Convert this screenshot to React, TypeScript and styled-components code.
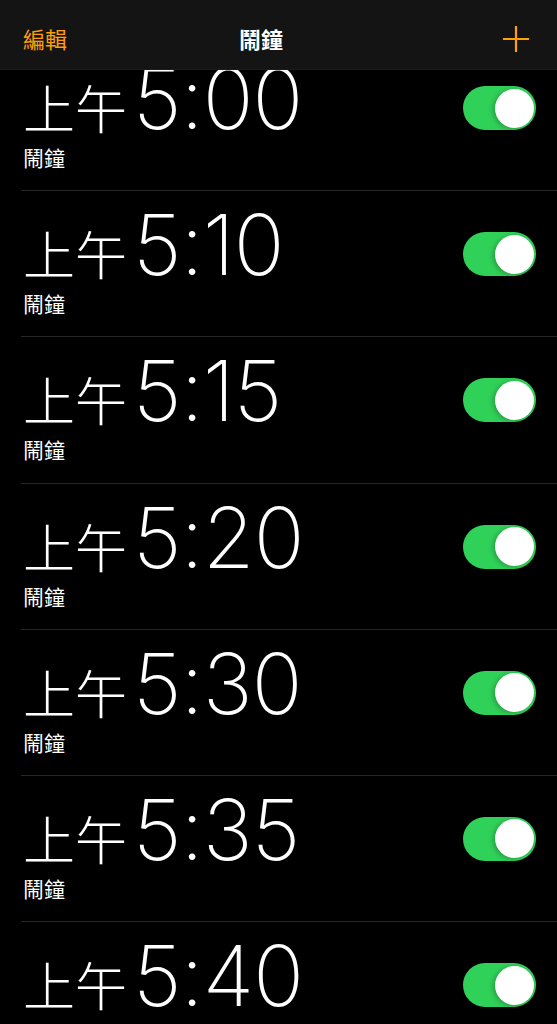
import { createGlobalStyle, styled } from "styled-components"

interface Alarm {
    id: number
    time: string
    on: boolean
}

const alarms: Alarm[] = [
    { id: 1, time: "5:00", on: true },
    { id: 2, time: "5:10", on: true },
    { id: 3, time: "5:15", on: true },
    { id: 4, time: "5:20", on: true },
    { id: 5, time: "5:30", on: true },
    { id: 6, time: "5:35", on: true },
    { id: 7, time: "5:40", on: true },
]

const GlobalStyle = createGlobalStyle`
    html, body {
        margin: 0;
        padding: 0;
        background: #000000;
        overflow: hidden;
    }
    body {
        font-family: "Noto Sans CJK TC", "Noto Sans", sans-serif;
        color: #ffffff;
    }
`

const Screen = styled.div`
    position: relative;
    width: 557px;
    height: 1024px;
    overflow: hidden;
    background: #000000;
`

// header floats over the list, like a translucent iOS nav bar
const NavBar = styled.header`
    position: absolute;
    top: 0;
    left: 0;
    right: 0;
    z-index: 2;
    height: 70px;
    box-sizing: border-box;
    padding: 0 28px 0 23px;
    display: grid;
    grid-template-columns: 216px auto 1fr;
    align-items: center;
    background: #141414;
    border-bottom: 1px solid #1c1c1c;
`

const NavButton = styled.button`
    justify-self: start;
    padding: 0;
    border: none;
    background: none;
    color: #ff9f0a;
    font-family: "Noto Sans CJK TC", sans-serif;
    font-size: 22px;
    line-height: 1;
    margin-top: 6px;
`

const Title = styled.h1`
    margin: 6px 0 0;
    font-size: 22px;
    font-weight: 700;
    line-height: 1;
    color: #ffffff;
`

const AddButton = styled.button`
    justify-self: end;
    width: 26px;
    height: 26px;
    padding: 0;
    margin-top: 8px;
    border: none;
    background: none;
    display: flex;
`

const List = styled.ul`
    list-style: none;
    margin: 0;
    padding: 45px 0 0 21px;
`

const Row = styled.li`
    height: 145.2px;
    border-bottom: 1px solid #262626;
    display: flex;
    align-items: flex-start;
    justify-content: space-between;
    padding-right: 21px;
`

const Info = styled.div`
    display: flex;
    flex-direction: column;
    padding-left: 2px;
`

const TimeLine = styled.div`
    display: flex;
    align-items: baseline;
    height: 96px;
    margin-top: 6px;
`

const Meridiem = styled.span`
    font-family: "Noto Sans CJK TC", sans-serif;
    font-size: 52px;
    font-weight: 300;
    line-height: 96px;
    margin-right: 6px;
`

const Time = styled.span`
    font-family: Inter, "Liberation Sans", sans-serif;
    font-size: 84px;
    font-weight: 200;
    line-height: 96px;
    letter-spacing: -1px;
`

const Label = styled.div`
    font-size: 21px;
    line-height: 1;
    margin-top: 0;
`

const Switch = styled.div<{ $on: boolean }>`
    position: relative;
    width: 73px;
    height: 44px;
    margin-top: 41px;
    border-radius: 22px;
    background: ${p => (p.$on ? "#30d158" : "#39393d")};
`

const Knob = styled.span<{ $on: boolean }>`
    position: absolute;
    top: 2.5px;
    left: ${p => (p.$on ? "31.5px" : "2.5px")};
    width: 39px;
    height: 39px;
    border-radius: 50%;
    background: #ffffff;
    box-shadow: -2px 1px 5px rgba(0, 0, 0, 0.25);
`

export default function App() {
    return <>
        <GlobalStyle />
        <Screen>
            <NavBar>
                <NavButton>編輯</NavButton>
                <Title>鬧鐘</Title>
                <AddButton aria-label="add">
                    <svg width="26" height="26" viewBox="0 0 26 26">
                        <path d="M13 0V26M0 13H26" stroke="#ff9f0a" strokeWidth="2.2" />
                    </svg>
                </AddButton>
            </NavBar>

            <List>
                {alarms.map(a => (
                    <Row key={a.id}>
                        <Info>
                            <TimeLine>
                                <Meridiem>上午</Meridiem>
                                <Time>{a.time}</Time>
                            </TimeLine>
                            <Label>鬧鐘</Label>
                        </Info>
                        <Switch $on={a.on}>
                            <Knob $on={a.on} />
                        </Switch>
                    </Row>
                ))}
            </List>
        </Screen>
    </>
}
